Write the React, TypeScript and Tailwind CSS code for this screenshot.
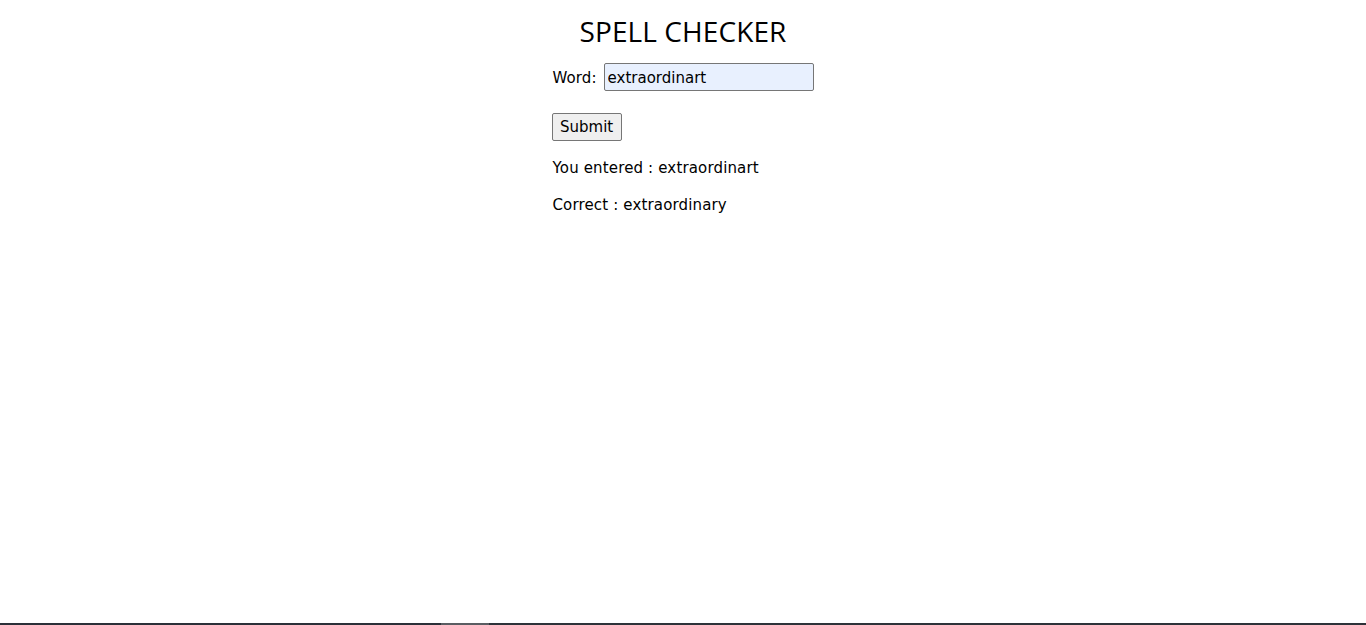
import { useState } from "react";

const App = () => {
  const [word, setWord] = useState("extraordinart");

  return (
    <div className="min-h-[625px] bg-white flex flex-col">
      <div className="flex-1 pt-[13px]">
        <h1 className="text-center text-[28px] leading-[36px] tracking-[0.1px] text-black font-['Open_Sans',sans-serif]">
          SPELL CHECKER
        </h1>
        <form
          className="w-[261px] mx-auto mt-[14px] font-['DejaVu_Sans',sans-serif] text-[15px] text-black"
          onSubmit={(e) => e.preventDefault()}
        >
          <div className="flex items-center">
            <label className="mr-[7px] pt-[2px] tracking-[0.1px]">Word:</label>
            <input
              type="text"
              value={word}
              onChange={(e) => setWord(e.target.value)}
              className="w-[210px] h-[28px] px-[3px] pt-[2px] bg-[#e8f0fe] border border-[#767676] rounded-[2px] outline-none"
            />
          </div>
          <button
            type="submit"
            className="-ml-px mt-[22px] h-[28px] px-[7.5px] pt-px bg-[#efefef] border border-[#767676] rounded-[2px]"
          >
            Submit
          </button>
          <p className="mt-[16px] leading-[22px] tracking-[0.15px]">You entered : extraordinart</p>
          <p className="mt-[15px] leading-[22px] tracking-[0.15px]">Correct : extraordinary</p>
        </form>
      </div>
      <div className="h-[2px] flex">
        <div className="w-[441px] bg-[#2b3038]" />
        <div className="w-[48px] bg-[#5a5d62]" />
        <div className="flex-1 bg-[#2d3239]" />
      </div>
    </div>
  );
};

export default App;
